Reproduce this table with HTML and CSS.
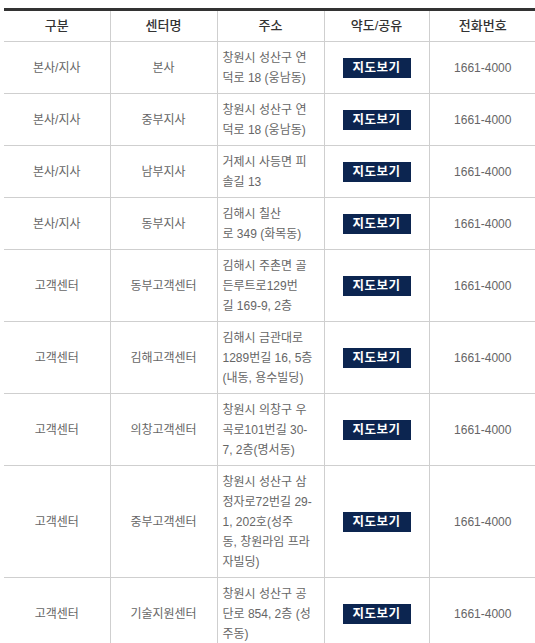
FILE: index.html
```html
<!DOCTYPE html>
<html lang="ko">
<head>
<meta charset="utf-8">
<title>센터 안내</title>
<link rel="stylesheet" href="styles.css">
</head>
<body>
<table class="centers">
  <colgroup>
    <col class="c1"><col class="c2"><col class="c3"><col class="c4"><col class="c5">
  </colgroup>
  <thead>
    <tr><th>구분</th><th>센터명</th><th>주소</th><th>약도/공유</th><th>전화번호</th></tr>
  </thead>
  <tbody>
    <tr><td>본사/지사</td><td>본사</td><td class="addr">창원시 성산구 연<br>덕로 18 (웅남동)</td><td><span class="map-btn">지도보기</span></td><td>1661-4000</td></tr>
    <tr><td>본사/지사</td><td>중부지사</td><td class="addr">창원시 성산구 연<br>덕로 18 (웅남동)</td><td><span class="map-btn">지도보기</span></td><td>1661-4000</td></tr>
    <tr><td>본사/지사</td><td>남부지사</td><td class="addr">거제시 사등면 피<br>솔길 13</td><td><span class="map-btn">지도보기</span></td><td>1661-4000</td></tr>
    <tr><td>본사/지사</td><td>동부지사</td><td class="addr">김해시 칠산<br>로 349 (화목동)</td><td><span class="map-btn">지도보기</span></td><td>1661-4000</td></tr>
    <tr><td>고객센터</td><td>동부고객센터</td><td class="addr">김해시 주촌면 골<br>든루트로129번<br>길 169-9, 2층</td><td><span class="map-btn">지도보기</span></td><td>1661-4000</td></tr>
    <tr><td>고객센터</td><td>김해고객센터</td><td class="addr">김해시 금관대로<br>1289번길 16, 5층<br>(내동, 용수빌딩)</td><td><span class="map-btn">지도보기</span></td><td>1661-4000</td></tr>
    <tr><td>고객센터</td><td>의창고객센터</td><td class="addr">창원시 의창구 우<br>곡로101번길 30-<br>7, 2층(명서동)</td><td><span class="map-btn">지도보기</span></td><td>1661-4000</td></tr>
    <tr><td>고객센터</td><td>중부고객센터</td><td class="addr">창원시 성산구 삼<br>정자로72번길 29-<br>1, 202호(성주<br>동, 창원라임 프라<br>자빌딩)</td><td><span class="map-btn">지도보기</span></td><td>1661-4000</td></tr>
    <tr><td>고객센터</td><td>기술지원센터</td><td class="addr">창원시 성산구 공<br>단로 854, 2층 (성<br>주동)</td><td><span class="map-btn">지도보기</span></td><td>1661-4000</td></tr>
  </tbody>
</table>
</body>
</html>
```
FILE: styles.css
```css
html, body {
  background: #fff;
}
body {
  margin: 8px 0 0 4px;
  overflow: hidden;
  font-family: "Liberation Sans", "Noto Sans CJK KR", sans-serif;
  font-size: 12px;
  color: #666;
}
.centers {
  width: 532px;
  table-layout: fixed;
  border-collapse: collapse;
  border-top: 3px solid #333;
}
.c1 { width: 106px; }
.c2 { width: 107px; }
.c3 { width: 107px; }
.c4 { width: 105px; }
.c5 { width: 107px; }
.centers th,
.centers td {
  border-bottom: 1px solid #cfcfcf;
  border-left: 1px solid #cfcfcf;
  text-align: center;
  vertical-align: middle;
}
.centers th:first-child,
.centers td:first-child {
  border-left: none;
}
.centers th {
  height: 30px;
  padding: 0;
  font-size: 13px;
  font-weight: 500;
  color: #333;
  line-height: 20px;
}
.centers td {
  padding: 6px 5px 5px;
  line-height: 20px;
}
.centers td.addr {
  text-align: left;
}
.map-btn {
  display: inline-block;
  width: 68px;
  height: 20px;
  line-height: 20px;
  background: #0c2550;
  color: #fff;
  font-weight: bold;
  font-size: 12.5px;
  letter-spacing: 0.5px;
  vertical-align: middle;
}
```
